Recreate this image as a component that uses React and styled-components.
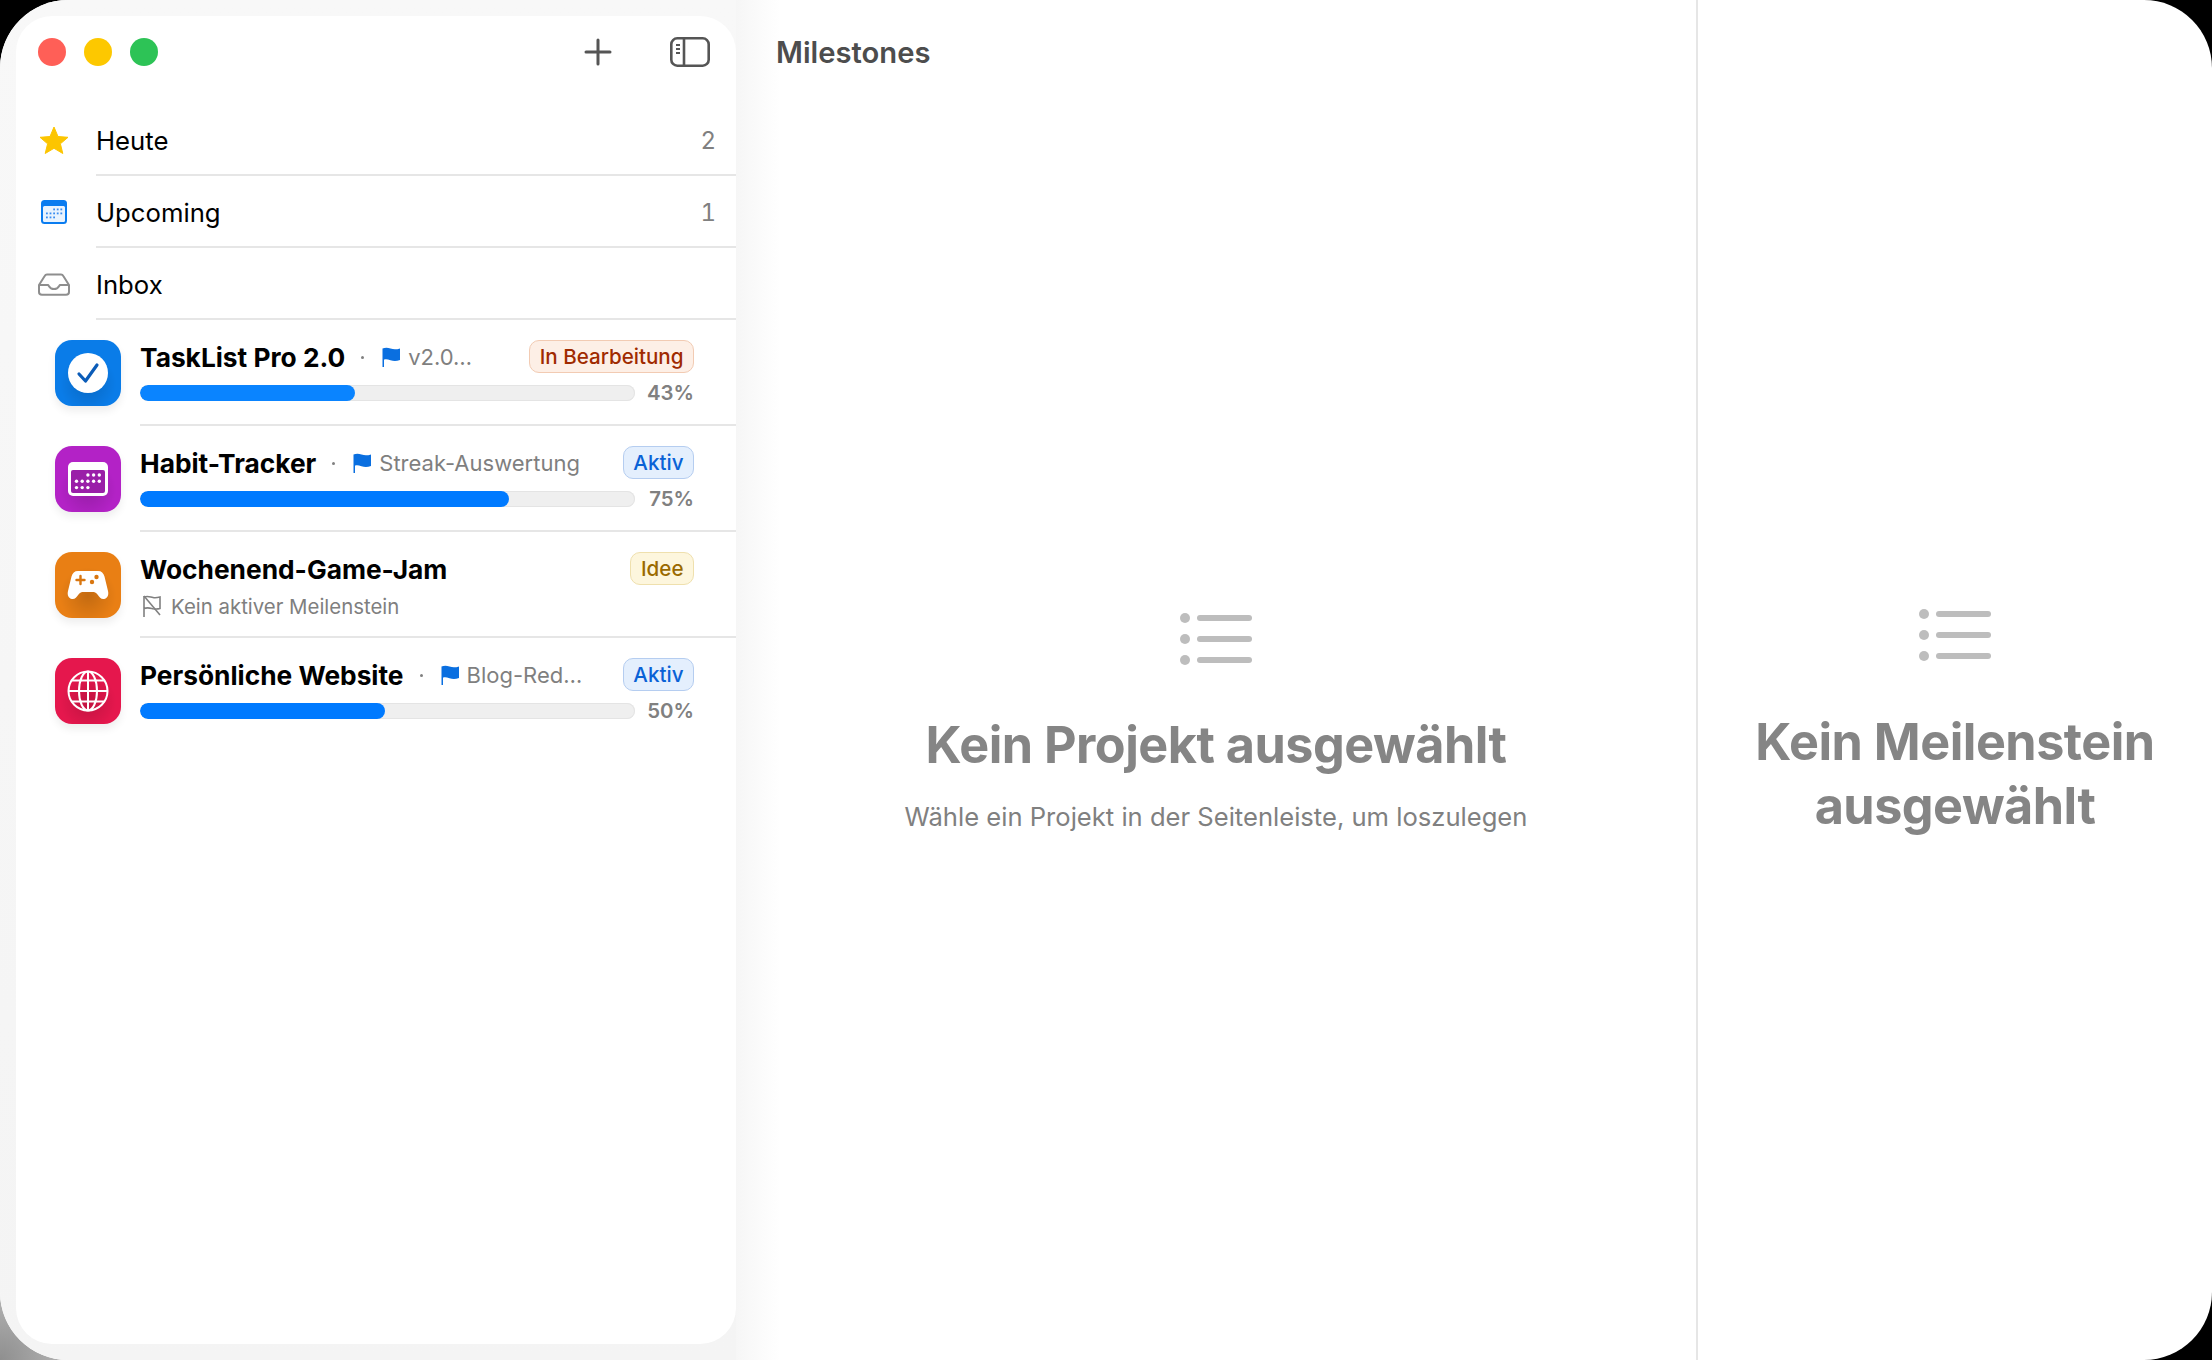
import React from "react";
import styled, { createGlobalStyle } from "styled-components";

const GlobalStyle = createGlobalStyle`
  html, body {
    margin: 0;
    padding: 0;
    background: radial-gradient(circle at 0 1360px, #8f8f8f 0, #b5b5b5 70px, #000 71px);
  }
  * { box-sizing: border-box; }
`;

const Frame = styled.div`
  width: 2212px;
  height: 1360px;
  background: #fff;
  border-radius: 68px;
  overflow: hidden;
  display: flex;
  font-family: Inter, "Liberation Sans", sans-serif;
  color: #000;
`;

const SidebarWell = styled.div`
  width: 736px;
  flex: none;
  padding: 16px 0 16px 16px;
  background: linear-gradient(180deg, #f8f8f8, #f4f4f4);
  position: relative;
  &::after {
    content: "";
    position: absolute;
    top: 0;
    bottom: 0;
    left: 100%;
    width: 44px;
    background: linear-gradient(90deg, #f6f6f6, #fff);
  }
`;

const Sidebar = styled.aside`
  height: 1328px;
  background: #fff;
  border-radius: 36px;
  display: flex;
  flex-direction: column;
`;

const TitleBar = styled.div`
  height: 88px;
  flex: none;
  display: flex;
  align-items: center;
  padding: 0 26px 16px 22px;
`;

const Light = styled.span`
  width: 28px;
  height: 28px;
  border-radius: 50%;
  background: ${(p) => p.$color};
  margin-right: 18px;
`;

const Spacer = styled.div`
  flex: 1;
`;

const ToolButton = styled.button`
  border: 0;
  padding: 0;
  background: none;
  display: flex;
  margin-left: ${(p) => p.$gap || 0}px;
`;

const NavRow = styled.div`
  display: flex;
  align-items: center;
  height: 72px;
`;

const NavIcon = styled.div`
  width: 80px;
  flex: none;
  display: flex;
  justify-content: center;
  padding-right: 4px;
`;

const NavBody = styled.div`
  flex: 1;
  height: 100%;
  display: flex;
  align-items: center;
  justify-content: space-between;
  border-bottom: 2px solid #e6e6e6;
  padding: 3px 20px 0 0;
  font-size: 25.700px;
`;

const Count = styled.span`
  color: #808080;
  font-size: 24px;
  font-variant-numeric: tabular-nums;
`;

const ProjectRow = styled.div`
  display: flex;
  margin-left: 39px;
`;

const AppIcon = styled.div`
  width: 66px;
  height: 66px;
  flex: none;
  margin-top: 20px;
  margin-right: 19px;
  border-radius: 17px;
  display: flex;
  align-items: center;
  justify-content: center;
  background:
    radial-gradient(circle at 50% 66%, rgba(0, 0, 0, 0.16), rgba(0, 0, 0, 0) 52%),
    ${(p) => p.$color};
  box-shadow: 0 5px 8px rgba(0, 0, 0, 0.07);
`;

const RowBody = styled.div`
  flex: 1;
  min-width: 0;
  height: 106px;
  padding: 20px 42px 0 0;
  border-bottom: 2px solid #e6e6e6;
  ${ProjectRow}:last-child & {
    border-bottom: 0;
  }
`;

const TopLine = styled.div`
  height: 33px;
  display: flex;
  align-items: center;
`;

const ProjectName = styled.span`
  font-size: 26.300px;
  font-weight: 700;
  white-space: nowrap;
  padding-top: 2px;
`;

const Dot = styled.span`
  width: 3px;
  height: 3px;
  border-radius: 50%;
  background: #808080;
  margin: 2px 17px 0 16px;
  flex: none;
`;

const Milestone = styled.span`
  font-size: 22px;
  color: #7f7f7f;
  white-space: nowrap;
  margin-left: 7px;
  padding-top: 1px;
`;

const Badge = styled.span`
  margin-left: auto;
  height: 33px;
  padding: 0 9.500px;
  display: flex;
  align-items: center;
  border-radius: 10px;
  font-size: 20.600px;
  font-weight: 500;
  border: 1px solid ${(p) => p.$border};
  background: ${(p) => p.$bg};
  color: ${(p) => p.$fg};
`;

const ProgressLine = styled.div`
  display: flex;
  align-items: center;
  height: 16px;
  margin-top: 12px;
`;

const Track = styled.div`
  width: 495px;
  height: 16px;
  flex: none;
  border-radius: 8px;
  background: #efefef;
  box-shadow: inset 0 0 0 1px #e4e4e4;
  overflow: hidden;
`;

const Fill = styled.div`
  height: 100%;
  border-radius: 8px;
  background: ${(p) => p.$color || "#007aff"};
`;

const Percent = styled.span`
  margin-left: auto;
  font-size: 20.400px;
  font-weight: 600;
  color: #808080;
  margin-top: -1px;
`;

const NoMilestone = styled.div`
  display: flex;
  align-items: center;
  height: 30px;
  margin-top: 6px;
  font-size: 20.400px;
  color: #7f7f7f;
  gap: 9px;
  padding-left: 2px;
`;

const Main = styled.main`
  flex: 1;
  position: relative;
  display: flex;
  flex-direction: column;
  z-index: 1;
`;

const Heading = styled.h1`
  margin: 0;
  height: 86px;
  flex: none;
  padding: 34px 0 0 40px;
  font-size: 29.200px;
  line-height: 38px;
  font-weight: 600;
  color: #4d4d4d;
`;

const EmptyState = styled.div`
  flex: 1;
  display: flex;
  flex-direction: column;
  align-items: center;
  text-align: center;
  padding-top: ${(p) => p.$top}px;
`;

const EmptyTitle = styled.h2`
  margin: ${(p) => p.$gap}px 0 0;
  font-size: 50.300px;
  line-height: 64px;
  font-weight: 700;
  color: #858585;
  letter-spacing: -0.5px;
`;

const EmptyText = styled.p`
  margin: 22px 0 0;
  font-size: 25.600px;
  line-height: 36px;
  color: #808080;
`;

const Detail = styled.section`
  width: 516px;
  flex: none;
  border-left: 2px solid #e6e6e6;
  display: flex;
  flex-direction: column;
`;

const Flag = () => (
  <svg width="20" height="20" viewBox="0 0 20 20">
    <path d="M1.500 20V1.600C4 .4 6.500 .4 9.500 1.500C12.500 2.600 15.500 2.600 19 1.400V13C15.500 14.300 12.500 14.300 9.500 13.200C6.500 12.100 4 12.100 3 12.700V20Z" fill="#0a6fe0" />
  </svg>
);

const SlashedFlag = () => (
  <svg width="20" height="24" viewBox="0 0 20 24" fill="none" stroke="#808080" strokeWidth="1.600">
    <path d="M2 23V2M2 3C6 1.500 8 3 11 3.500C13.500 4 16 3.500 18 3V14.500C15.500 15.200 13.500 15.200 11 14.700C8 14 5.500 13 2 14.500" />
    <path d="M2 2L18 21" />
  </svg>
);

const PlusIcon = () => (
  <svg width="28" height="28" viewBox="0 0 28 28" fill="none" stroke="#555" strokeWidth="3" strokeLinecap="round">
    <path d="M14 2V26M2 14H26" />
  </svg>
);

const SidebarIcon = () => (
  <svg width="40" height="30" viewBox="0 0 40 30" fill="none" stroke="#555" strokeWidth="2.600">
    <rect x="1.300" y="1.300" width="37.400" height="27.400" rx="6" />
    <path d="M14 1.300V28.700" />
    <path d="M6 8H10M6 12H10M6 16H10" strokeWidth="2" />
  </svg>
);

const StarIcon = () => (
  <svg width="30" height="28" viewBox="0 0 30 28">
    <path d="M15 1L19 10.500L29 11.300L21.400 17.800L23.800 27.500L15 22.300L6.200 27.500L8.600 17.800L1 11.300L11 10.500Z" fill="#fcc500" stroke="#fcc500" strokeLinejoin="round" />
  </svg>
);

const dots = [];
for (let r = 0; r < 3; r++) {
  for (let c = 0; c < 5; c++) {
    if (r === 0 && c < 2) continue;
    if (r === 2 && c > 2) continue;
    dots.push([c, r]);
  }
}

const CalendarIcon = () => (
  <svg width="26" height="24" viewBox="0 0 26 24">
    <rect width="26" height="24" rx="3.500" fill="#0a7cf0" />
    <rect x="2" y="6" width="22" height="16" rx="1.500" fill="#e9f3fe" />
    {dots.map(([c, r]) => (
      <rect key={`${c}-${r}`} x={5 + c * 3.600} y={8.500 + r * 4} width="1.800" height="1.800" fill="#3a8df0" />
    ))}
  </svg>
);

const InboxIcon = () => (
  <svg width="32" height="23" viewBox="0 0 32 23" fill="none" stroke="#8e8e8e" strokeWidth="2" strokeLinejoin="round">
    <path d="M9 1.500H23C24 1.500 24.800 2 25.300 3L31 12V19C31 20.700 30 21.800 28 21.800H4C2 21.800 1 20.700 1 19V12L6.700 3C7.200 2 8 1.500 9 1.500Z" />
    <path d="M1 12H10C11 12 11 16 16 16C21 16 21 12 22 12H31" />
  </svg>
);

const ListIcon = () => (
  <svg width="72" height="52" viewBox="0 0 72 52" fill="#bdbdbd">
    <circle cx="5" cy="5" r="5" />
    <circle cx="5" cy="26" r="5" />
    <circle cx="5" cy="47" r="5" />
    <rect x="17" y="2" width="55" height="6" rx="3" />
    <rect x="17" y="23" width="55" height="6" rx="3" />
    <rect x="17" y="44" width="55" height="6" rx="3" />
  </svg>
);

const CheckGlyph = () => (
  <svg width="40" height="40" viewBox="0 0 40 40">
    <circle cx="20" cy="20" r="20" fill="#fff" />
    <path d="M11 21L17.500 28L29 12" fill="none" stroke="#0b5cb8" strokeWidth="3.200" strokeLinecap="round" strokeLinejoin="round" />
  </svg>
);

const CalendarGlyph = () => (
  <svg width="40" height="34" viewBox="0 0 40 34">
    <rect width="40" height="34" rx="5" fill="#fff" />
    <rect x="3" y="8" width="34" height="23" rx="2" fill="#9a1fa8" />
    {dots.map(([c, r]) => (
      <circle key={`${c}-${r}`} cx={8.500 + c * 5.700} cy={13 + r * 6.300} r="1.700" fill="#fff" />
    ))}
  </svg>
);

const GamepadGlyph = () => (
  <svg width="42" height="30" viewBox="0 0 42 30">
    <path d="M11 1H31C34.500 1 36.500 3 37.500 6.500L41 21C42 25 40.500 28.500 37 29C34 29.400 32.500 27 30.500 24.500C29 22.500 27.500 22 25.500 22H16.500C14.500 22 13 22.500 11.500 24.500C9.500 27 8 29.400 5 29C1.500 28.500 0 25 1 21L4.500 6.500C5.500 3 7.500 1 11 1Z" fill="#fff" />
    <path d="M13.500 6V14M9.500 10H17.500" stroke="#d9760f" strokeWidth="2.400" strokeLinecap="round" />
    <circle cx="29.500" cy="7" r="2.200" fill="#d9760f" />
    <circle cx="25" cy="12" r="2.200" fill="#d9760f" />
  </svg>
);

const GlobeGlyph = () => (
  <svg width="42" height="42" viewBox="0 0 42 42" fill="none" stroke="#fff" strokeWidth="2">
    <circle cx="21" cy="21" r="19.500" />
    <ellipse cx="21" cy="21" rx="9" ry="19.500" />
    <path d="M21 1.500V40.500M1.500 21H40.500M4.500 10.500H37.500M4.500 31.500H37.500" />
  </svg>
);

const projects = [
  {
    name: "TaskList Pro 2.0",
    color: "#0a7ce8",
    glyph: <CheckGlyph />,
    milestone: "v2.0…",
    progress: 43,
    bar: 43.500,
    barColor: "#0a84ff",
    badge: { label: "In Bearbeitung", bg: "#fdefe6", border: "#f2cbb3", fg: "#a02a00" },
  },
  {
    name: "Habit-Tracker",
    color: "#b322c6",
    glyph: <CalendarGlyph />,
    milestone: "Streak-Auswertung",
    progress: 75,
    bar: 74.600,
    badge: { label: "Aktiv", bg: "#e4effd", border: "#b5cdf0", fg: "#0a62d6" },
  },
  {
    name: "Wochenend-Game-Jam",
    color: "#e97f14",
    glyph: <GamepadGlyph />,
    badge: { label: "Idee", bg: "#fdf6dd", border: "#efe0ad", fg: "#9a6a00" },
  },
  {
    name: "Persönliche Website",
    color: "#e5174d",
    glyph: <GlobeGlyph />,
    milestone: "Blog-Red…",
    progress: 50,
    bar: 49.500,
    badge: { label: "Aktiv", bg: "#e4effd", border: "#b5cdf0", fg: "#0a62d6" },
  },
];

const App = () => {
  return (
    <>
      <GlobalStyle />
      <Frame>
        <SidebarWell>
          <Sidebar>
            <TitleBar>
              <Light $color="#ff5f57" />
              <Light $color="#fdc800" />
              <Light $color="#2dc356" />
              <Spacer />
              <ToolButton>
                <PlusIcon />
              </ToolButton>
              <ToolButton $gap={58}>
                <SidebarIcon />
              </ToolButton>
            </TitleBar>
            <NavRow>
              <NavIcon>
                <StarIcon />
              </NavIcon>
              <NavBody>
                Heute <Count>2</Count>
              </NavBody>
            </NavRow>
            <NavRow>
              <NavIcon>
                <CalendarIcon />
              </NavIcon>
              <NavBody>
                Upcoming <Count>1</Count>
              </NavBody>
            </NavRow>
            <NavRow>
              <NavIcon>
                <InboxIcon />
              </NavIcon>
              <NavBody>Inbox</NavBody>
            </NavRow>
            {projects.map((p) => (
              <ProjectRow key={p.name}>
                <AppIcon $color={p.color}>{p.glyph}</AppIcon>
                <RowBody>
                  <TopLine>
                    <ProjectName>{p.name}</ProjectName>
                    {p.milestone && (
                      <>
                        <Dot />
                        <Flag />
                        <Milestone>{p.milestone}</Milestone>
                      </>
                    )}
                    <Badge $bg={p.badge.bg} $border={p.badge.border} $fg={p.badge.fg}>
                      {p.badge.label}
                    </Badge>
                  </TopLine>
                  {p.progress ? (
                    <ProgressLine>
                      <Track>
                        <Fill $color={p.barColor} style={{ width: `${p.bar}%` }} />
                      </Track>
                      <Percent>{p.progress}%</Percent>
                    </ProgressLine>
                  ) : (
                    <NoMilestone>
                      <SlashedFlag />
                      Kein aktiver Meilenstein
                    </NoMilestone>
                  )}
                </RowBody>
              </ProjectRow>
            ))}
          </Sidebar>
        </SidebarWell>
        <Main>
          <Heading>Milestones</Heading>
          <EmptyState $top={527}>
            <ListIcon />
            <EmptyTitle $gap={48}>Kein Projekt ausgewählt</EmptyTitle>
            <EmptyText>Wähle ein Projekt in der Seitenleiste, um loszulegen</EmptyText>
          </EmptyState>
        </Main>
        <Detail>
          <EmptyState $top={609}>
            <ListIcon />
            <EmptyTitle $gap={49}>
              Kein Meilenstein
              <br />
              ausgewählt
            </EmptyTitle>
          </EmptyState>
        </Detail>
      </Frame>
    </>
  );
};

export default App;
